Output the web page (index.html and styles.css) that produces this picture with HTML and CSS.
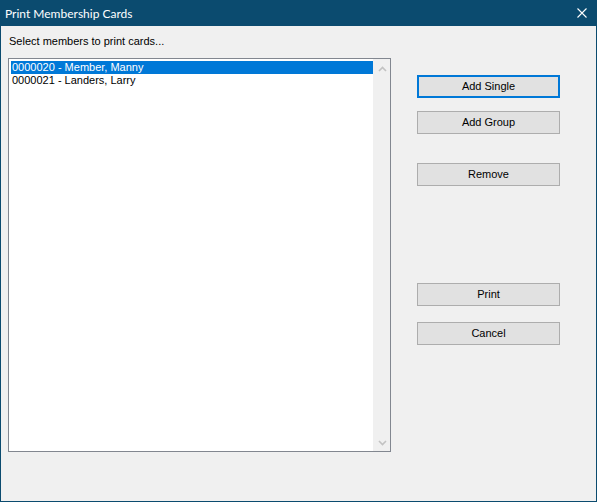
FILE: index.html
```html
<!DOCTYPE html>
<html>
<head>
<meta charset="utf-8">
<title>Print Membership Cards</title>
<link rel="stylesheet" href="styles.css">
</head>
<body>
<div class="window">
  <div class="titlebar">
    <span class="title">Print Membership Cards</span>
    <svg class="close" width="10" height="10" viewBox="0 0 10 10"><path d="M0.5 0.5 L9.5 9.5 M9.5 0.5 L0.5 9.5" stroke="#fff" stroke-width="1.1" fill="none"/></svg>
  </div>
  <div class="body">
    <div class="left">
      <div class="label">Select members to print cards...</div>
      <div class="listbox">
        <div class="items">
          <div class="item selected">0000020 - Member, Manny</div>
          <div class="item">0000021 - Landers, Larry</div>
        </div>
        <div class="scrollbar">
          <svg class="arrow" width="9" height="6" viewBox="0 0 9 6"><path d="M1 5 L4.5 1.5 L8 5" stroke="#c2c2c2" stroke-width="1.6" fill="none"/></svg>
          <svg class="arrow" width="9" height="6" viewBox="0 0 9 6"><path d="M1 1 L4.5 4.5 L8 1" stroke="#c2c2c2" stroke-width="1.6" fill="none"/></svg>
        </div>
      </div>
    </div>
    <div class="buttons">
      <button class="btn default add-single">Add Single</button>
      <button class="btn add-group">Add Group</button>
      <button class="btn remove">Remove</button>
      <button class="btn print">Print</button>
      <button class="btn cancel">Cancel</button>
    </div>
  </div>
</div>
</body>
</html>
```
FILE: styles.css
```css
html, body {
  margin: 0;
  padding: 0;
}
body {
  font-family: "Liberation Sans", Arial, sans-serif;
  font-size: 11px;
  color: #000;
}
.window {
  width: 597px;
  height: 502px;
  background: #0b4b6f;
  display: flex;
  flex-direction: column;
}
.titlebar {
  height: 26px;
  flex: none;
  display: flex;
  align-items: center;
  justify-content: space-between;
  padding: 0 10px 0 5px;
  color: #fff;
  font-family: Lato, "Noto Sans", sans-serif;
  font-size: 12px;
  line-height: 15px;
}
.title {
  margin-top: 1px;
}
.body {
  flex: 1;
  margin: 0 1px 1px 1px;
  background: #f0f0f0;
  display: flex;
  padding-left: 7px;
}
.left {
  width: 383px;
  flex: none;
}
.label {
  margin-top: 8px;
  line-height: 15px;
  padding-left: 1px;
}
.listbox {
  margin-top: 9px;
  height: 394px;
  box-sizing: border-box;
  border: 1px solid #828790;
  background: #fff;
  display: flex;
}
.items {
  flex: 1;
  padding: 2px 0 0 2px;
}
.item {
  height: 13px;
  line-height: 13px;
  padding-left: 1px;
  white-space: nowrap;
}
.item.selected {
  background: #0078d7;
  color: #fff;
}
.scrollbar {
  width: 17px;
  background: #f0f0f0;
  display: flex;
  flex-direction: column;
  justify-content: space-between;
  align-items: center;
  padding: 7px 0 5px;
}
.arrow {
  display: block;
  margin-left: 1px;
}
.buttons {
  margin-left: 26px;
  display: flex;
  flex-direction: column;
  padding-top: 49px;
}
.btn {
  width: 143px;
  height: 23px;
  box-sizing: border-box;
  border: 1px solid #adadad;
  background: #e1e1e1;
  font-family: inherit;
  font-size: 11px;
  color: #000;
  padding: 0;
  margin: 0;
  line-height: 15px;
}
.btn.default {
  border: 2px solid #0078d7;
}
.add-group { margin-top: 13px; }
.remove { margin-top: 29px; }
.print { margin-top: 97px; }
.cancel { margin-top: 16px; }
```
